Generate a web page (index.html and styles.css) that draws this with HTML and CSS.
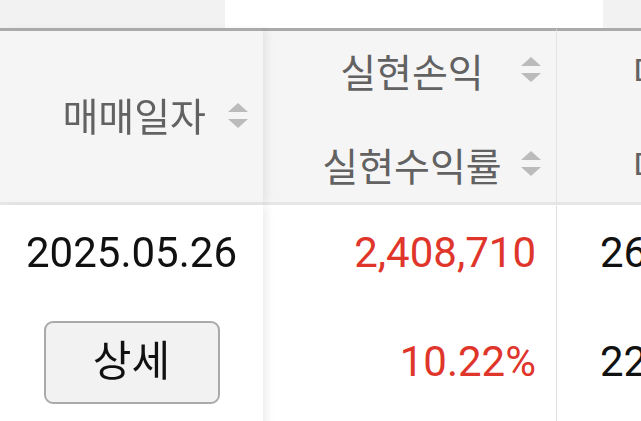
FILE: index.html
```html
<!DOCTYPE html>
<html lang="ko">
<head>
  <meta charset="UTF-8" />
  <meta name="viewport" content="width=device-width, initial-scale=1.0" />
  <title>매매내역</title>
  <link rel="stylesheet" href="styles.css">
</head>
<body>
  <div class="tabs">
    <div class="tab"></div>
    <div class="tab active"></div>
    <div class="tab"></div>
  </div>

  <table class="trades">
    <thead>
      <tr>
        <th class="col-date">
          <div class="sort">
            <span class="label">매매일자</span>
            <svg class="sort-icon" viewBox="0 0 20 26"><polygon points="10,0 20,9 0,9"/><polygon points="0,16 20,16 10,25"/></svg>
          </div>
        </th>
        <th class="col-profit">
          <div class="sort">
            <span class="label">실현손익</span>
            <svg class="sort-icon" viewBox="0 0 20 26"><polygon points="10,0 20,9 0,9"/><polygon points="0,16 20,16 10,25"/></svg>
          </div>
          <div class="sort">
            <span class="label">실현수익률</span>
            <svg class="sort-icon" viewBox="0 0 20 26"><polygon points="10,0 20,9 0,9"/><polygon points="0,16 20,16 10,25"/></svg>
          </div>
        </th>
        <th class="col-amount">
          <div class="sort"><span class="label">매수금액</span></div>
          <div class="sort"><span class="label">매도금액</span></div>
        </th>
      </tr>
    </thead>
    <tbody>
      <tr>
        <td class="col-date">
          <div class="line">2025.05.26</div>
          <div class="line"><button class="btn-detail">상세</button></div>
        </td>
        <td class="col-profit up">
          <div class="line">2,408,710</div>
          <div class="line">10.22%</div>
        </td>
        <td class="col-amount">
          <div class="line">26,001,290</div>
          <div class="line">22,592,580</div>
        </td>
      </tr>
    </tbody>
  </table>
</body>
</html>
```

FILE: styles.css
```css
body {
  margin: 0;
  font-family: Roboto, "Noto Sans CJK KR", sans-serif;
  background: #fff;
  color: #111;
  overflow: hidden;
}

.tabs {
  display: flex;
  height: 28px;
  background: #f2f2f2;
}

.tab {
  width: 225px;
}

.tab.active {
  width: 378px;
  background: #fff;
}

.tabs .tab:last-child {
  flex: 1;
}

.trades {
  border-collapse: separate;
  border-spacing: 0;
  table-layout: fixed;
  width: 800px;
}

.trades th,
.trades td {
  box-sizing: border-box;
  padding: 0;
}

.trades th {
  height: 177px;
  background: #f5f5f5;
  border-top: 3px solid #aaa;
  border-bottom: 3px solid #e6e6e6;
  font-weight: normal;
  vertical-align: middle;
}

.trades td {
  height: 240px;
  padding-top: 3px;
  vertical-align: top;
  white-space: nowrap;
}

.col-date {
  width: 263px;
  position: sticky;
  left: 0;
  z-index: 1;
  box-shadow: 6px 0 8px -2px rgba(0, 0, 0, 0.07);
}

.trades td.col-date {
  background: #fff;
}

.col-profit {
  width: 294px;
  border-right: 1px solid #e2e2e2;
}

.sort {
  display: flex;
  justify-content: flex-end;
  align-items: center;
  height: 60px;
  white-space: nowrap;
}

.sort .label {
  font-size: 39px;
  color: #626262;
}

.sort-icon {
  width: 20px;
  height: 26px;
  fill: #bbb;
}

th.col-date .sort {
  padding-right: 15px;
  margin-top: -6px;
}

th.col-date .sort-icon {
  margin-left: 22px;
  margin-top: 4px;
}

th.col-profit {
  padding-right: 15px;
}

th.col-profit .sort + .sort {
  margin-top: 34px;
}

th.col-profit .label {
  width: 198px;
  text-align: center;
}

th.col-profit .sort-icon {
  margin-left: 10px;
}

th.col-amount .sort {
  justify-content: flex-start;
  padding-left: 76px;
}

th.col-amount .sort + .sort {
  margin-top: 34px;
}

.line {
  height: 90px;
  line-height: 90px;
  font-size: 42px;
}

.line + .line {
  margin-top: 19px;
}

td.col-date .line {
  display: flex;
  justify-content: center;
  align-items: center;
}

td.col-profit {
  text-align: right;
  padding-right: 20px;
}

td.col-amount {
  padding-left: 43px;
}

.up {
  color: #e0352b;
}

.btn-detail {
  width: 176px;
  height: 83px;
  border: 2px solid #aaa;
  border-radius: 9px;
  background: #f2f2f2;
  font-family: Roboto, "Noto Sans CJK KR", sans-serif;
  font-size: 42px;
  color: #111;
  padding: 0;
  line-height: 1;
}
```
